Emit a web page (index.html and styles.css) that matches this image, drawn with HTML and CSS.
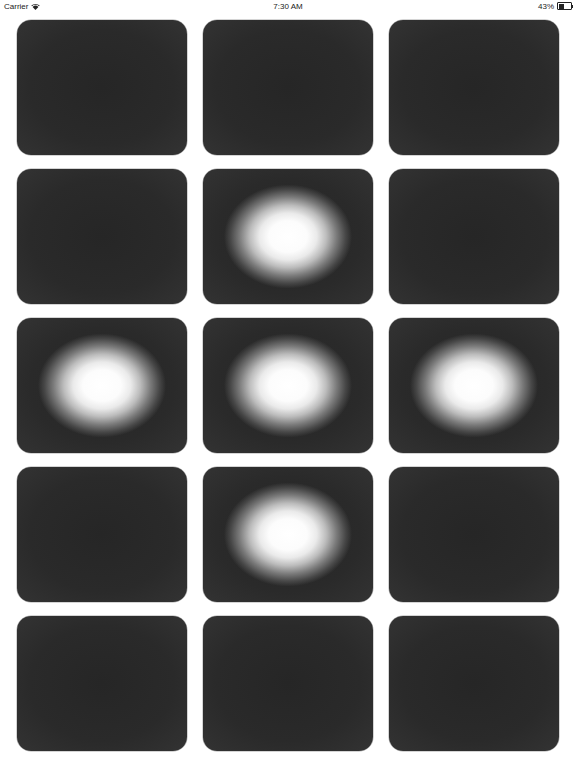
FILE: index.html
```html
<!DOCTYPE html>
<html>
<head>
<meta charset="utf-8">
<link rel="stylesheet" href="styles.css">
</head>
<body>
<div class="status">
  <div class="left">Carrier
    <svg class="wifi" width="9" height="7" viewBox="0 0 9 7"><path d="M4.5 7 L1.6 3.9 A4.2 4.2 0 0 1 7.4 3.9 Z" fill="#222"/><path d="M0.3 2.6 A6 6 0 0 1 8.7 2.6 L8 3.3 A5 5 0 0 0 1 3.3 Z" fill="#222"/></svg>
  </div>
  <div class="center">7:30 AM</div>
  <div class="right">43%
    <span class="battery"><span class="level"></span></span><span class="nub"></span>
  </div>
</div>
<div class="grid">
  <div class="tile"></div><div class="tile"></div><div class="tile"></div>
  <div class="tile"></div><div class="tile on"></div><div class="tile"></div>
  <div class="tile on"></div><div class="tile on"></div><div class="tile on"></div>
  <div class="tile"></div><div class="tile on"></div><div class="tile"></div>
  <div class="tile"></div><div class="tile"></div><div class="tile"></div>
</div>
</body>
</html>
```
FILE: styles.css
```css
html, body { margin: 0; padding: 0; background: #fff; }
body { width: 576px; height: 768px; overflow: hidden; font-family: "Liberation Sans", Arial, sans-serif; }
.status { height: 12px; display: flex; align-items: center; justify-content: space-between; font-size: 8px; color: #222; padding: 0 3px 0 4px; position: relative; }
.left { display: flex; align-items: center; gap: 3px; }
.center { position: absolute; left: 0; right: 0; text-align: center; top: 2px; }
.right { display: flex; align-items: center; }
.battery { width: 12px; height: 5px; border: 1px solid #222; border-radius: 1px; margin-left: 3px; display: inline-flex; padding: 0.5px; box-sizing: content-box; }
.level { width: 43%; background: #222; }
.nub { width: 1px; height: 3px; background: #222; }
.grid { display: grid; grid-template-columns: repeat(3, 170px); grid-auto-rows: 135px; column-gap: 16px; row-gap: 14px; padding: 8px 0 0 17px; }
.tile { border-radius: 14px; background: radial-gradient(ellipse at center, #262626 0%, #2a2a2a 60%, #333 100%); box-shadow: 0 0 0 0.5px #aaa; }
.tile.on { background: radial-gradient(ellipse 64px 52px at 50% 50%, #fff 0%, #fcfcfc 30%, #eaeaea 45%, #bcbcbc 60%, #7a7a7a 76%, #474747 90%, rgba(44,44,44,0) 100%), radial-gradient(ellipse at center, #262626 0%, #2a2a2a 60%, #333 100%); }
```
